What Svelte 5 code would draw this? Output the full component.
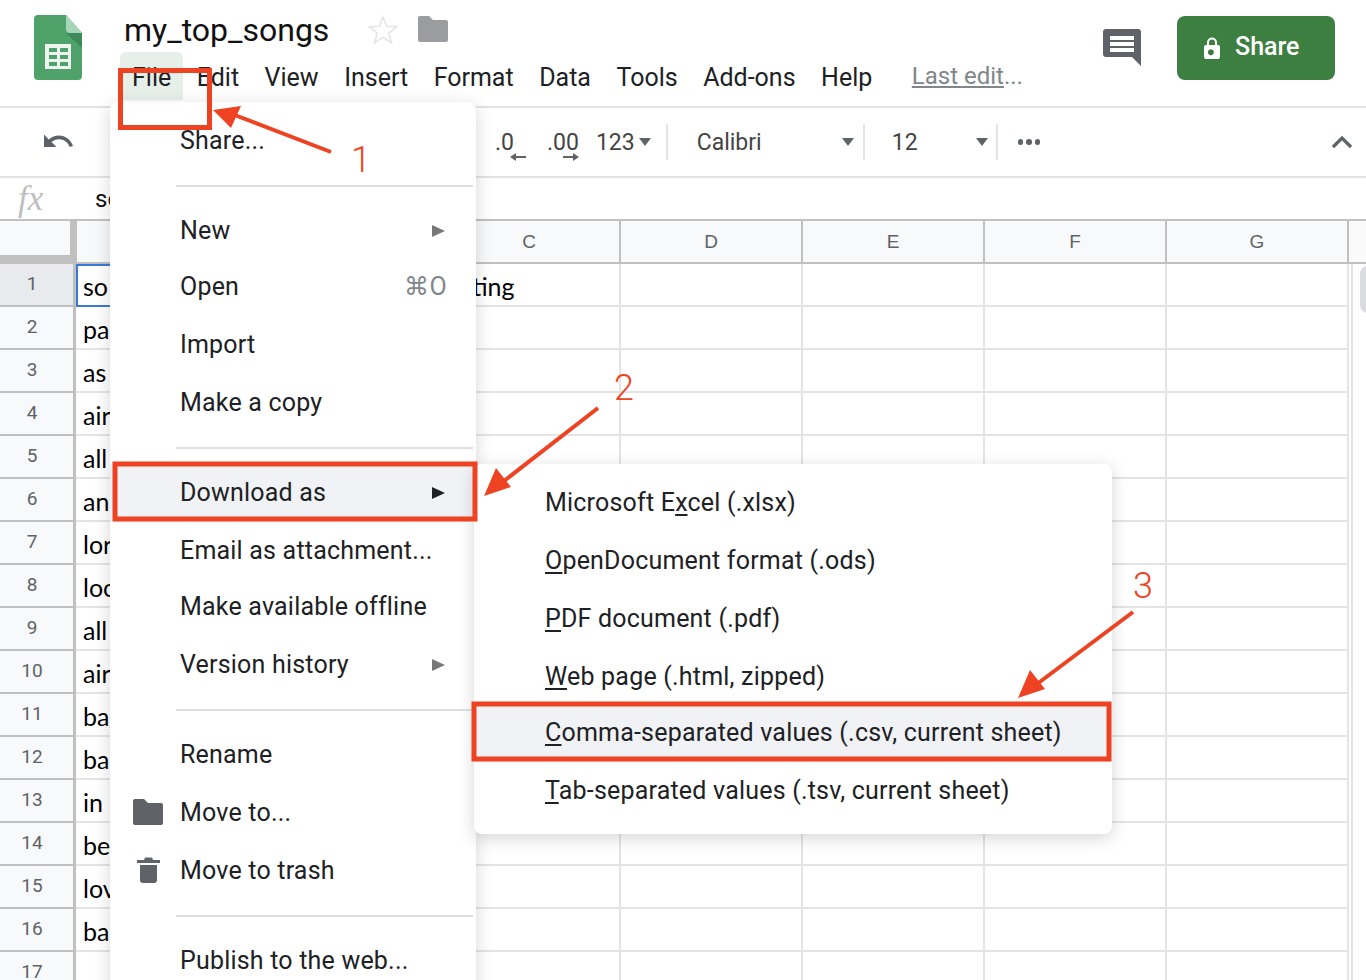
<script>
  const menubar = ['File', 'Edit', 'View', 'Insert', 'Format', 'Data', 'Tools', 'Add-ons', 'Help'];
  const columns = ['', '', 'C', 'D', 'E', 'F', 'G'];
  const cells = ['so', 'pa', 'as', 'air', 'all', 'an', 'lor', 'loc', 'all', 'air', 'ba', 'ba', 'in', 'be', 'lov', 'ba', ''];
</script>

<div class="page">
  <header class="top">
    <svg class="logo" viewBox="0 0 48 65" width="48" height="65" aria-hidden="true">
      <path d="M4 0H32L48 18V61a4 4 0 0 1-4 4H4a4 4 0 0 1-4-4V4a4 4 0 0 1 4-4z" fill="#4fa26a" />
      <path d="M32 18L48 33V18z" fill="#3f8a5a" />
      <path d="M32 0V14a4 4 0 0 0 4 4H48z" fill="#a5d6b8" />
      <rect x="11" y="29" width="26" height="25" fill="#eef5f0" />
      <g fill="#4fa26a">
        <rect x="15" y="33" width="8" height="4" /><rect x="26" y="33" width="8" height="4" />
        <rect x="15" y="40" width="8" height="4" /><rect x="26" y="40" width="8" height="4" />
        <rect x="15" y="47" width="8" height="4" /><rect x="26" y="47" width="8" height="4" />
      </g>
    </svg>
    <div class="titles">
      <div class="title-row">
        <span class="doc-title">my_top_songs</span>
        <svg class="star" viewBox="0 0 30 30" width="30" height="30" aria-hidden="true">
          <path d="M15 2l3.6 9.2 10 .6-7.7 6.3 2.6 9.7L15 22.4 6.500 27.800l2.600-9.700L1.400 11.800l10-.6z" fill="none" stroke="#e4e5e6" stroke-width="1.600" />
        </svg>
        <svg class="folder" viewBox="0 0 30 26" width="30" height="26" aria-hidden="true">
          <path d="M2 0h9l4 4h13a2 2 0 0 1 2 2v18a2 2 0 0 1-2 2H2a2 2 0 0 1-2-2V2a2 2 0 0 1 2-2z" fill="#9b9ca0" />
        </svg>
      </div>
      <nav class="menubar">
        {#each menubar as item, i}
          <span class="menubar-item" class:open={i === 0}>{item}</span>
        {/each}
        <span class="last-edit"><u>Last edit </u>...</span>
      </nav>
    </div>
    <svg class="comment" viewBox="0 0 38 37" width="38" height="37" aria-hidden="true">
      <path d="M3 0H35a3 3 0 0 1 3 3V37L29 28H3a3 3 0 0 1-3-3V3a3 3 0 0 1 3-3z" fill="#5f6368" />
      <rect x="7" y="7" width="24" height="4" fill="#fff" /><rect x="7" y="13" width="24" height="4" fill="#fff" /><rect x="7" y="19" width="24" height="4" fill="#fff" />
    </svg>
    <button class="share">
      <svg viewBox="0 0 16 22" width="16" height="22" aria-hidden="true">
        <path d="M14 8h-1V5.500a5 5 0 0 0-10 0V8H2a2 2 0 0 0-2 2v10a2 2 0 0 0 2 2h12a2 2 0 0 0 2-2V10a2 2 0 0 0-2-2zM5 5.500a3 3 0 0 1 6 0V8H5zM8 18a3 3 0 1 1 0-5.600A3 3 0 0 1 8 18z" fill="#fff" />
      </svg>
      <span>Share</span>
    </button>
  </header>

  <div class="toolbar">
    <svg class="undo" viewBox="0 0 30 16" width="30" height="16" aria-hidden="true">
      <path d="M15 2.500C11 2.500 7.500 4 4.800 6.400L0 1.500V14h12.500L7.500 9c2-1.700 4.700-2.800 7.500-2.800 5 0 9.200 3.200 10.700 7.800l3.300-1.100C27 6.800 21.500 2.500 15 2.500z" fill="#5f6368" />
    </svg>
    <span class="tool-num dec">.0<svg viewBox="0 0 16 8" width="16" height="8" aria-hidden="true"><path d="M16 3H6V0L0 4l6 4V5h10z" fill="#5f6368" /></svg></span>
    <span class="tool-num inc">.00<svg viewBox="0 0 16 8" width="16" height="8" aria-hidden="true"><path d="M0 3h10V0l6 4-6 4V5H0z" fill="#5f6368" /></svg></span>
    <span class="tool-num fmt">123</span><i class="caret c1"></i>
    <b class="sep s1"></b>
    <span class="tool-text font-name">Calibri</span><i class="caret c2"></i>
    <b class="sep s2"></b>
    <span class="tool-text font-size">12</span><i class="caret c3"></i>
    <b class="sep s3"></b>
    <span class="dots"><i></i><i></i><i></i></span>
    <svg class="chevron" viewBox="0 0 22 14" width="22" height="14" aria-hidden="true">
      <path d="M2 12L11 3l9 9" fill="none" stroke="#5f6368" stroke-width="3.200" />
    </svg>
  </div>

  <div class="formula">
    <span class="fx">fx</span>
    <span class="formula-text">song</span>
  </div>

  <div class="grid">
    <div class="row head-row">
      <div class="corner"></div>
      {#each columns as c}
        <div class="col-head">{c}</div>
      {/each}
      <div class="head-rest"></div>
    </div>
    {#each cells as text, i}
      <div class="row">
        <div class="row-head" class:active={i === 0}>{i + 1}</div>
        <div class="cell first" class:selected={i === 0}>{text}</div>
        <div class="cell"></div>
        <div class="cell third">{i === 0 ? 'rating' : ''}</div>
        <div class="cell"></div>
        <div class="cell"></div>
        <div class="cell"></div>
        <div class="cell"></div>
        <div class="rest"></div>
      </div>
    {/each}
    <div class="thumb"></div>
  </div>

  <div class="menu file-menu">
    <div class="item">Share...</div>
    <hr />
    <div class="item">New<i class="arrow"></i></div>
    <div class="item tight">Open<span class="key">⌘O</span></div>
    <div class="item">Import</div>
    <div class="item">Make a copy</div>
    <hr />
    <div class="item hover">Download as<i class="arrow dark"></i></div>
    <div class="item">Email as attachment...</div>
    <div class="item tight">Make available offline</div>
    <div class="item">Version history<i class="arrow"></i></div>
    <hr />
    <div class="item">Rename</div>
    <div class="item">
      <svg class="item-icon" viewBox="0 0 30 26" width="30" height="26" aria-hidden="true">
        <path d="M2 0h9l4 4h13a2 2 0 0 1 2 2v18a2 2 0 0 1-2 2H2a2 2 0 0 1-2-2V2a2 2 0 0 1 2-2z" fill="#5f6368" />
      </svg>
      Move to...
    </div>
    <div class="item">
      <svg class="item-icon trash" viewBox="0 0 23 26" width="23" height="26" aria-hidden="true">
        <path d="M3 8h17v15a3 3 0 0 1-3 3H6a3 3 0 0 1-3-3zM0 3h7l1-2.500h7l1 2.500h7v3H0z" fill="#5f6368" />
      </svg>
      Move to trash
    </div>
    <hr />
    <div class="item">Publish to the web...</div>
  </div>

  <div class="menu sub-menu">
    <div class="item">Microsoft E<u>x</u>cel (.xlsx)</div>
    <div class="item"><u>O</u>penDocument format (.ods)</div>
    <div class="item"><u>P</u>DF document (.pdf)</div>
    <div class="item"><u>W</u>eb page (.html, zipped)</div>
    <div class="item hover tight"><u>C</u>omma-separated values (.csv, current sheet)</div>
    <div class="item"><u>T</u>ab-separated values (.tsv, current sheet)</div>
  </div>

  <svg class="marks" viewBox="0 0 1366 980" width="1366" height="980" aria-hidden="true">
    <g fill="none" stroke="#ee4323" stroke-width="5">
      <rect x="120.500" y="70.500" width="89" height="57" />
      <rect x="115" y="464" width="360" height="55" />
      <rect x="474" y="704" width="635" height="55" />
      <path d="M331 152L232 114" stroke-width="4" />
      <path d="M598 408L504 481" stroke-width="4" />
      <path d="M1133 612L1037 684" stroke-width="4" />
    </g>
    <g fill="#ee4323">
      <path d="M213 110L241 106L231 128z" />
      <path d="M484 496L496 468L511 487z" />
      <path d="M1018 698L1030 670L1045 689z" />
    </g>
  </svg>
  <span class="num n1">1</span>
  <span class="num n2">2</span>
  <span class="num n3">3</span>
</div>

<style>
  :global(body) { margin: 0; background: #fff; }
  .page {
    position: relative;
    width: 1366px;
    height: 980px;
    overflow: hidden;
    font-family: Roboto, "Liberation Sans", sans-serif;
    color: #202124;
  }
  .top {
    display: flex;
    height: 106px;
    border-bottom: 2px solid #e3e3e3;
    box-sizing: content-box;
  }
  .logo { margin: 15px 0 0 34px; flex: none; }
  .titles { margin-left: 40px; width: 1000px; }
  .title-row { display: flex; align-items: center; height: 30px; margin-top: 15px; }
  .doc-title { margin-left: 2px; font-size: 32px; color: #111; line-height: 30px; }
  .star { margin-left: 39px; }
  .folder { margin-left: 20px; margin-top: -2px; }
  .menubar { display: flex; margin-top: 7px; height: 48px; font-size: 25px; align-items: center; margin-left: -2px; }
  .menubar-item { padding: 0 12px; margin-right: 1.500px; height: 48px; line-height: 52px; border-radius: 6px 6px 0 0; }
  .menubar-item.open { background: #e6f0e9; }
  .last-edit { margin-left: 26px; color: #80868b; font-size: 24px; line-height: 52px; }
  .comment { margin: 29px 0 0 -19px; flex: none; }
  .share {
    flex: none;
    display: flex;
    align-items: center;
    gap: 15px;
    width: 158px;
    height: 64px;
    margin: 16px 0 0 36px;
    padding: 0 0 0 27px;
    border: 0;
    border-radius: 8px;
    background: #3d7e41;
    color: #fff;
    font: 500 25px Roboto, sans-serif;
  }
  .share span { margin-top: -4px; }

  .toolbar {
    display: flex;
    align-items: center;
    height: 68px;
    border-bottom: 2px solid #e3e3e3;
    color: #444;
  }
  .undo { margin-left: 44px; margin-top: -2px; }
  .tool-num { position: relative; font-size: 24px; color: #444; }
  .tool-num svg { position: absolute; top: 24px; right: -12px; }
  .dec { margin-left: 421px; font-size: 23px; }
  .inc { margin-left: 33px; font-size: 23px; }
  .inc svg { right: 0; top: 24px; }
  .fmt { margin-left: 17px; font-size: 23px; }
  .caret { border: 6.500px solid transparent; border-top: 8px solid #5f6368; border-bottom: 0; width: 0; height: 0; }
  .c1 { margin-left: 4px; }
  .sep { width: 2px; height: 36px; background: #e3e3e3; }
  .s1 { margin-left: 15px; }
  .tool-text { font-size: 23px; }
  .font-name { margin-left: 29px; width: 145px; }
  .c2 { margin-left: 0; }
  .s2 { margin-left: 9px; }
  .font-size { margin-left: 27px; width: 84px; }
  .s3 { margin-left: 8px; }
  .dots { display: flex; gap: 3px; margin-left: 20px; }
  .dots i { width: 5.500px; height: 5.500px; border-radius: 50%; background: #5f6368; }
  .chevron { margin-left: auto; margin-right: 13px; }

  .formula { display: flex; height: 41px; align-items: center; }
  .fx {
    margin-left: 18px;
    font: italic 35px "Liberation Serif", serif;
    color: #bdbfc2;
    width: 77px;
    line-height: 41px;
  }
  .formula-text { font-size: 24px; color: #111; }

  .grid { position: relative; border-top: 2px solid #c0c0c0; }
  .row { display: flex; height: 43px; }
  .head-row { height: 41px; border-bottom: 2px solid #c0c0c0; background: #f8f9fa; box-sizing: content-box; }
  .corner {
    flex: none;
    box-sizing: border-box;
    width: 77px;
    height: 41px;
    background: #f8f9fa;
    border-right: 7px solid #c0c0c0;
    border-bottom: 7px solid #c0c0c0;
  }
  .col-head {
    flex: none;
    box-sizing: border-box;
    width: 182px;
    border-right: 2px solid #c0c0c0;
    text-align: center;
    font: 19px/41px "Liberation Sans", sans-serif;
    color: #5f6368;
  }
  .col-head:nth-child(2), .col-head:nth-child(3) { width: 181px; }
  .head-rest { flex: 1; background: #fafafa; }
  .row-head {
    flex: none;
    box-sizing: border-box;
    width: 76px;
    border-right: 3px solid #c0c0c0;
    border-bottom: 2px solid #c0c0c0;
    background: #f8f9fa;
    padding-right: 9px;
    text-align: center;
    font: 19px/40px Roboto, sans-serif;
    color: #5f6368;
  }
  .row-head.active { background: #e8eaed; }
  .cell {
    flex: none;
    box-sizing: border-box;
    width: 182px;
    border-right: 2px solid #e4e4e4;
    border-bottom: 2px solid #e4e4e4;
    padding-left: 7px;
    font: 25px/44px Lato, sans-serif;
    color: #000;
    overflow: hidden;
    white-space: nowrap;
  }
  .first { width: 182px; }
  .first.selected { border: 2px solid #3b78d8; padding-left: 5px; line-height: 41px; }
  .row .cell:nth-child(3) { width: 181px; }
  .third { padding-left: 12px; }
  .rest { flex: 1; border-left: 2px solid #e4e4e4; margin-left: 2px; }
  .thumb {
    position: absolute;
    right: -10px;
    top: 45px;
    width: 16px;
    height: 47px;
    border-radius: 8px;
    background: #dadce0;
  }

  .menu {
    position: absolute;
    box-sizing: border-box;
    background: #fff;
    border-radius: 8px;
    box-shadow: 0 4px 16px rgba(60, 64, 67, 0.22);
    font-size: 25px;
    letter-spacing: 0.2px;
    color: #202124;
  }
  .file-menu { left: 110px; top: 102px; width: 366px; height: 900px; padding-top: 10px; }
  .sub-menu { left: 474px; top: 464px; width: 638px; height: 370px; padding-top: 10px; }
  .item {
    position: relative;
    height: 58px;
    line-height: 58px;
    padding-left: 70px;
    white-space: nowrap;
  }
  .sub-menu .item { padding-left: 71px; }
  .tight { margin-top: -2px; }
  .item.hover { background: #f1f2f5; }
  .item u { text-underline-offset: 3px; text-decoration-thickness: 2px; }
  hr {
    border: 0;
    height: 2px;
    background: #dfdfe3;
    margin: 15px 3px 15px 66px;
  }
  .arrow {
    position: absolute;
    right: 31px;
    top: 23px;
    border: 6.500px solid transparent;
    border-left: 13px solid #777;
    border-right: 0;
  }
  .arrow.dark { border-left-color: #202124; }
  .key { position: absolute; right: 29px; top: 0; color: #80868b; }
  .item-icon { position: absolute; left: 23px; top: 15px; }
  .item-icon.trash { left: 27px; }

  .marks { position: absolute; left: 0; top: 0; pointer-events: none; }
  .num { position: absolute; font-size: 36px; line-height: 36px; color: #ee4323; font-family: Roboto, sans-serif; font-weight: 300; }
  .n1 { left: 351px; top: 142px; }
  .n2 { left: 614px; top: 370px; }
  .n3 { left: 1133px; top: 568px; }
</style>
